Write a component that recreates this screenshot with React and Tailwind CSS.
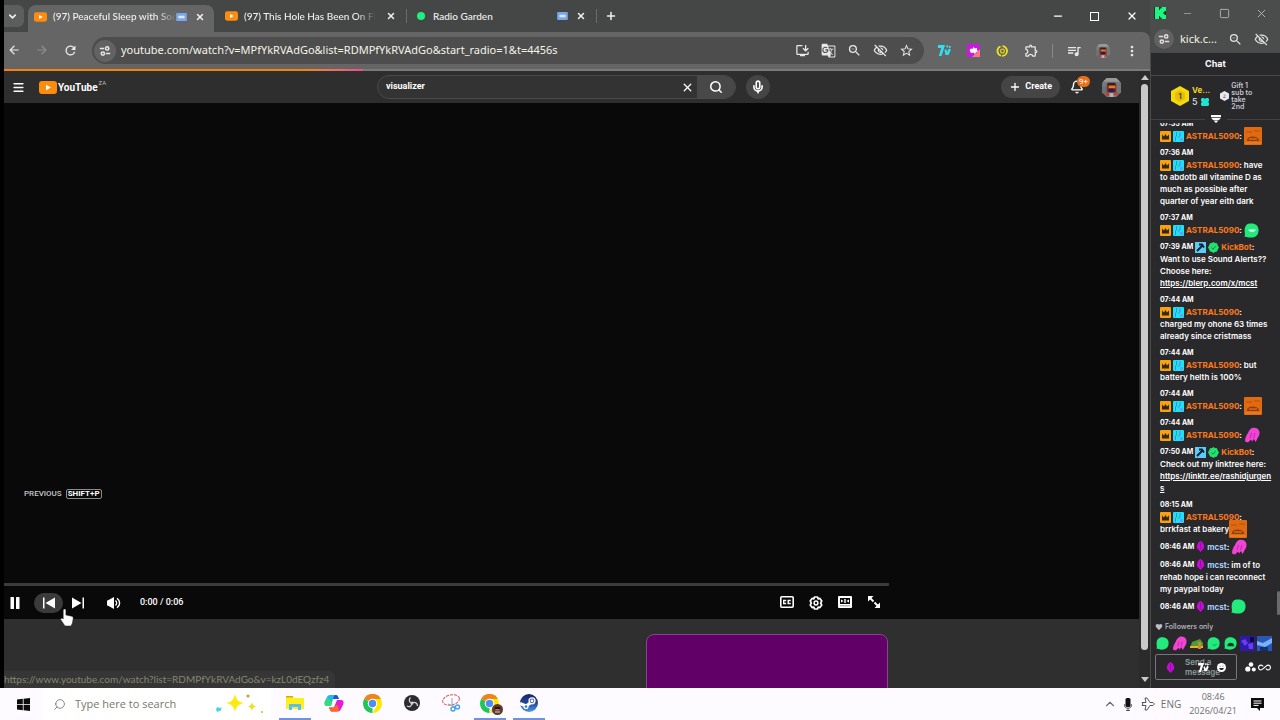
import { useState } from "react";
import {
  MdArrowBack,
  MdArrowForward,
  MdRefresh,
  MdOutlineInstallDesktop,
  MdGTranslate,
  MdZoomOut,
  MdOutlineVisibilityOff,
  MdStarBorder,
  MdOutlineExtension,
  MdQueueMusic,
  MdMoreVert,
  MdFavorite,
  MdAllInclusive,
} from "react-icons/md";
import {
  ChevronDown,
  ChevronUp,
  X,
  Plus,
  Menu,
  Search,
  Mic,
  Bell,
  Minus,
  Square,
} from "lucide-react";

/* ---------- small shared icons ---------- */

function PlayBadge({ className }) {
  return (
    <svg viewBox="0 0 18 13" className={className}>
      <rect width="18" height="13" rx="3" fill="#fb8c0e" />
      <path d="M7 3.7 12 6.5 7 9.3Z" fill="#fff" />
    </svg>
  );
}

function CastBadge() {
  return (
    <svg viewBox="0 0 12 9" className="h-2 w-[11px] shrink-0">
      <rect width="12" height="9" rx="1" fill="#7ba7ea" />
      <rect x="2.5" y="3" width="7" height="3" rx="1" fill="#dbe8ff" />
    </svg>
  );
}

function TuneIcon({ className }) {
  return (
    <svg
      viewBox="0 0 14 14"
      className={className}
      fill="none"
      stroke="currentColor"
      strokeWidth="1.8"
    >
      <path d="M1 4h5M8 10h5" />
      <circle cx="9.5" cy="4" r="1.9" />
      <circle cx="4.5" cy="10" r="1.9" />
    </svg>
  );
}

function Avatar({ className }) {
  return (
    <svg viewBox="0 0 20 20" className={className}>
      <path d="M5 0h10l5 5v10l-5 5H5l-5-5V5Z" fill="#77787c" />
      <path d="M5 0h10l4 4H1Z" fill="#98999d" />
      <path d="M0 9h5v7H0Z" fill="#64747f" />
      <path d="M5 6h10v9H5Z" fill="#7a2c1c" />
      <path d="M6 5h8v3H6Z" fill="#38201f" />
      <path d="M7 8h7v3H7Z" fill="#ee7a26" />
      <path d="M7 11h6v4H7Z" fill="#33194c" />
      <path d="M3 15h5l-1 4H4ZM12 15h4l1 3h-5Z" fill="#b0453a" />
      <path d="M8 16h4v4H8Z" fill="#b4b5b8" />
    </svg>
  );
}

/* ---------- chat badges and emotes ---------- */

function CrownBadge() {
  return (
    <svg viewBox="0 0 11 11" className="size-[11px] shrink-0">
      <rect width="11" height="11" rx="1" fill="#f5a312" />
      <path d="M2 3.5 4 5.5 5.5 3 7 5.5 9 3.5V8.5H2Z" fill="#3b2503" />
    </svg>
  );
}

function CyanBadge() {
  return (
    <svg viewBox="0 0 11 11" className="size-[11px] shrink-0">
      <rect width="11" height="11" rx="1" fill="#1fe0f5" />
      <path d="M3.500 1v4l-1 1v4M7 1v4l-2 1.500" stroke="#3f8fd0" fill="none" />
      <path d="M7 7h3v3H7Z" fill="#6d9df0" />
    </svg>
  );
}

function BotBadge() {
  return (
    <svg viewBox="0 0 11 11" className="size-[11px] shrink-0">
      <rect width="11" height="11" fill="#5ccbf5" />
      <path
        d="M2 9 7 4M4 2.500h3l2 3"
        stroke="#0d2033"
        strokeWidth="1.8"
        fill="none"
      />
    </svg>
  );
}

function VerifiedBadge() {
  return (
    <svg viewBox="0 0 11 11" className="size-[11px] shrink-0">
      <path
        d="M5.500 0 7 1l2 .2.600 1.800L11 5.500 9.800 7.500 9 9.500 7 10 5.500 11 4 10 2 9.500 1.200 7.500 0 5.500 1.200 3.200 2 1.200 4 1Z"
        fill="#1fe070"
      />
      <path d="m3.500 5.600 1.500 1.500 2.800-3" stroke="#12813f" fill="none" />
    </svg>
  );
}

function MicBadge({ className }) {
  return (
    <svg viewBox="0 0 10 12" className={className}>
      <path
        d="M5 0C7 1 8.500 2.500 9 5.500 9.500 8 8 9 7 10L5 12 3 10C2 9 .5 8 1 5.500 1.500 2.500 3 1 5 0Z"
        fill="#c50bd6"
      />
      <path d="M5 2v7" stroke="#8a0798" />
    </svg>
  );
}

function OrangeEmote() {
  return (
    <svg viewBox="0 0 18 18" className="-my-1 inline-block size-[18px]">
      <rect width="18" height="18" rx="1" fill="#e06a10" />
      <path d="M2 5h6M10 4h6" stroke="#b9500a" />
      <path d="M3 12.500c1-4 10-4 12 0v1.500H3Z" fill="#8f3d05" />
      <path d="M5 12h8M1 16h16" stroke="#f08a2c" />
    </svg>
  );
}

function GreenEmote({ mouth, className }) {
  return (
    <svg viewBox="0 0 14 14" className={className}>
      <path
        d="M4 .8C8-.4 13 1 13.500 5.500S12 13 8 13.500C4.500 14 2.500 12.800 .3 12.500 1.500 11 .5 9.500 .6 6.500 .7 3.500 2 1.500 4 .8Z"
        fill="#22ea7c"
      />
      {mouth === "smile" && <path d="M4 6h7c0 3-7 3-7 0Z" fill="#d8ffe9" />}
      {mouth === "open" && (
        <path d="M3.500 10c0-5 7.500-5 7.500 0Z" fill="#0c3b22" />
      )}
      {mouth === "line" && (
        <path d="M6 8.500c2 .8 3 .3 4.500-.8" stroke="#119950" fill="none" />
      )}
    </svg>
  );
}

function PinkEmote({ className }) {
  return (
    <svg viewBox="0 0 16 16" className={className}>
      <path
        d="M8 1c3-1 7 0 7.500 4 .3 4-1.500 5-2.500 7.500l-1.500 2.500-1.500-3-2 2.500-1-2-3 3-3-1C1 11 2 9 4 6 5 3.500 6 2 8 1Z"
        fill="#f044d2"
      />
      <path d="M7.500 6 6 11M11 6l-1.500 5" stroke="#c426ac" fill="none" />
    </svg>
  );
}

const emotes = {
  orange: <OrangeEmote />,
  pink: <PinkEmote className="-my-1 inline-block size-4" />,
  greenSmile: (
    <GreenEmote mouth="smile" className="-my-1 inline-block size-[15px]" />
  ),
  green: <GreenEmote className="-my-1 inline-block size-[15px]" />,
};

/* ---------- data ---------- */

const messages = [
  { time: "07:35 AM", user: "astral", emote: "orange" },
  {
    time: "07:36 AM",
    user: "astral",
    first: "have",
    lines: [
      "to abdotb all vitamine D as",
      "much as possible after",
      "quarter of year eith dark",
    ],
  },
  { time: "07:37 AM", user: "astral", emote: "greenSmile" },
  {
    time: "07:39 AM",
    user: "bot",
    lines: ["Want to use Sound Alerts??", "Choose here:"],
    link: ["https://blerp.com/x/mcst"],
  },
  {
    time: "07:44 AM",
    user: "astral",
    lines: ["charged my ohone 63 times", "already since cristmass"],
  },
  {
    time: "07:44 AM",
    user: "astral",
    first: "but",
    lines: ["battery helth is 100%"],
  },
  { time: "07:44 AM", user: "astral", emote: "orange" },
  { time: "07:44 AM", user: "astral", emote: "pink" },
  {
    time: "07:50 AM",
    user: "bot",
    lines: ["Check out my linktree here:"],
    link: ["https://linktr.ee/rashidjurgen", "s"],
  },
  {
    time: "08:15 AM",
    user: "astral",
    lines: ["brrkfast at bakery"],
    tailEmote: "orange",
  },
  { time: "08:46 AM", user: "mcst", emote: "pink" },
  {
    time: "08:46 AM",
    user: "mcst",
    first: "im of to",
    lines: ["rehab hope i can reconnect", "my paypal today"],
  },
  { time: "08:46 AM", user: "mcst", emote: "green" },
];

function Message({ msg }) {
  const time = <span className="text-[7px] font-bold">{msg.time}</span>;
  return (
    <li className="text-[8px] leading-3 font-semibold whitespace-nowrap text-white">
      {msg.user === "astral" && (
        <>
          <div className="flex h-3 items-center">{time}</div>
          <div className="flex h-3 items-center gap-0.5">
            <CrownBadge />
            <CyanBadge />
            <span>
              <span className="font-bold text-[#ff7a1a]">ASTRAL5090</span>:
            </span>
            {msg.first}
            {msg.emote && emotes[msg.emote]}
          </div>
        </>
      )}
      {msg.user === "bot" && (
        <div className="flex h-3 items-center gap-0.5">
          {time}
          <BotBadge />
          <VerifiedBadge />
          <span>
            <span className="font-bold text-[#ff7a1a]">KickBot</span>:
          </span>
        </div>
      )}
      {msg.user === "mcst" && (
        <div className="flex h-[13px] items-center gap-0.5">
          {time}
          <MicBadge className="h-[11px] w-[9px]" />
          <span>
            <span className="font-bold text-[#a9d0ff]">mcst</span>:
          </span>
          {msg.first}
          {msg.emote && emotes[msg.emote]}
        </div>
      )}
      {msg.lines?.map((line, i) => (
        <div key={line} className="flex h-3 items-center">
          {line}
          {i === msg.lines.length - 1 && msg.tailEmote && emotes[msg.tailEmote]}
        </div>
      ))}
      {msg.link && (
        <a href="#link" className="underline">
          {msg.link.map((part) => (
            <span key={part} className="block">
              {part}
            </span>
          ))}
        </a>
      )}
    </li>
  );
}

/* ---------- browser chrome ---------- */

function TabStrip() {
  return (
    <div className="flex h-8 items-center bg-[#454746] font-[Lato,sans-serif] text-[10px] font-medium text-[#f0f0f0]">
      <button
        aria-label="Search tabs"
        className="flex h-[22px] w-5 items-center justify-center rounded-r-md bg-[#5c5d5d] pr-1"
      >
        <ChevronDown size={11} strokeWidth={3.5} />
      </button>

      <div className="ml-1 flex h-full items-end">
        <div className="flex h-[27px] w-[186px] items-center rounded-t-lg bg-[#656565] pb-1 pl-1.5">
          <PlayBadge className="h-2.5 w-[13px] shrink-0" />
          <span className="ml-1.5 w-[123px] mask-r-from-85% whitespace-nowrap">
            (97) Peaceful Sleep with Soc
          </span>
          <CastBadge />
          <button aria-label="Close tab" className="ml-2">
            <X size={10} strokeWidth={3.5} />
          </button>
        </div>
      </div>

      <div className="ml-[11px] flex items-center">
        <PlayBadge className="h-2.5 w-[13px] shrink-0" />
        <span className="ml-1.5 w-[132px] mask-r-from-85% whitespace-nowrap">
          (97) This Hole Has Been On Fire
        </span>
        <button aria-label="Close tab" className="ml-2.5">
          <X size={10} strokeWidth={3.5} />
        </button>
        <span className="ml-2.5 h-3.5 w-px bg-[#6b6b6b]" />
      </div>

      <div className="ml-2.5 flex items-center">
        <span className="size-2 rounded-full bg-[#1fee83]" />
        <span className="ml-2 w-[124px] whitespace-nowrap">Radio Garden</span>
        <CastBadge />
        <button aria-label="Close tab" className="ml-2">
          <X size={10} strokeWidth={3.5} />
        </button>
        <span className="ml-2.5 h-3.5 w-px bg-[#6b6b6b]" />
        <button aria-label="New tab" className="ml-2">
          <Plus size={12} strokeWidth={3} />
        </button>
      </div>

      <div className="ml-auto flex items-center text-white">
        <button aria-label="Minimize" className="flex w-[37px] justify-center">
          <Minus size={12} strokeWidth={2.5} />
        </button>
        <button aria-label="Maximize" className="flex w-[37px] justify-center">
          <span className="size-[9px] border border-white" />
        </button>
        <button aria-label="Close" className="flex w-[37px] justify-center">
          <X size={12} strokeWidth={2.5} />
        </button>
      </div>
    </div>
  );
}

function Toolbar() {
  const omniIcons = [
    ["Install", MdOutlineInstallDesktop],
    ["Translate", MdGTranslate],
    ["Zoom", MdZoomOut],
    ["Tracking", MdOutlineVisibilityOff],
    ["Bookmark", MdStarBorder],
  ];
  return (
    <div className="bg-[#454746]">
      <div className="flex h-[37px] items-center rounded-tr-lg bg-[#656565] pr-2 text-[#e8e8e8]">
        <div className="flex gap-2">
          <button aria-label="Back" className="flex w-5 justify-center">
            <MdArrowBack size={14} />
          </button>
          <button
            aria-label="Forward"
            className="flex w-5 justify-center text-[#8e8e8e]"
          >
            <MdArrowForward size={14} />
          </button>
          <button aria-label="Reload" className="flex w-5 justify-center">
            <MdRefresh size={15} />
          </button>
        </div>

        <div className="ml-3 flex h-[27px] flex-1 items-center rounded-full bg-[#4d4d4d] pr-1.5 pl-0.5">
          <button
            aria-label="Site information"
            className="flex size-[22px] shrink-0 items-center justify-center rounded-full bg-[#626262]"
          >
            <TuneIcon className="size-3" />
          </button>
          <input
            aria-label="Address"
            defaultValue="youtube.com/watch?v=MPfYkRVAdGo&list=RDMPfYkRVAdGo&start_radio=1&t=4456s"
            className="ml-[5px] min-w-0 flex-1 bg-transparent font-['Noto_Sans',sans-serif] text-[11px] text-[#f4f4e8] outline-none"
          />
          <div className="flex gap-0.5">
            {omniIcons.map(([label, Icon]) => (
              <button
                key={label}
                aria-label={label}
                className="flex w-6 justify-center"
              >
                <Icon size={15} />
              </button>
            ))}
          </div>
        </div>

        <div className="ml-2.5 flex items-center gap-[9px]">
          <button aria-label="7TV" className="flex w-5 justify-center">
            <svg viewBox="0 0 13 11" className="h-[11px] w-[13px]" fill="#35dcf0">
              <path d="M0 0h7L6 3.500 3.500 11H.8L3.200 3H0Z" />
              <path d="M6.500 5 8.200 4l1 3 1.600-3.500L13 4.500 10.500 10H7.500ZM8 1l2-1 .5 2-1.500.8ZM11 1l2 .3-.8 1.700H11Z" />
            </svg>
          </button>
          <button
            aria-label="Sound extension"
            className="flex w-5 justify-center"
          >
            <svg viewBox="0 0 13 13" className="size-[13px]">
              <rect width="13" height="13" fill="#c819dc" />
              <path d="M13 5v8H5Z" fill="#f7768c" />
              <path
                d="M2.500 6 4 4.500 5.500 5 6.500 3 8 4.500l2-.5V6l1 1.500-2 .5-1 2-1.500-1.500L4 9Z"
                fill="#fff"
              />
            </svg>
          </button>
          <button
            aria-label="Coin extension"
            className="flex w-5 justify-center"
          >
            <svg viewBox="0 0 12 12" className="size-3" fill="none">
              <path
                d="M6.500 1.200A4.800 4.800 0 0 1 6 10.800M4.500 1.500A4.800 4.800 0 0 0 5 10.600"
                stroke="#f0e11c"
                strokeWidth="1.800"
              />
              <circle cx="6.500" cy="6" r="1.900" stroke="#d8c911" strokeWidth="1.300" />
            </svg>
          </button>
          <button aria-label="Extensions" className="flex w-5 justify-center">
            <MdOutlineExtension size={15} />
          </button>
          <span className="mx-0.5 h-3.5 w-px bg-[#8a8a8a]" />
          <button aria-label="Media" className="flex w-5 justify-center">
            <MdQueueMusic size={16} />
          </button>
          <button aria-label="Profile" className="flex w-5 justify-center">
            <Avatar className="size-3.5" />
          </button>
          <button aria-label="More" className="flex w-5 justify-center">
            <MdMoreVert size={16} />
          </button>
        </div>
      </div>
      {/* page load bar */}
      <div className="h-0.5 bg-[#7a7a7a]">
        <div className="h-full w-[359px] bg-linear-to-r from-[#f5820f] from-85% to-[#e8508c]" />
      </div>
    </div>
  );
}

/* ---------- YouTube page ---------- */

function Masthead() {
  const [query, setQuery] = useState("visualizer");
  return (
    <header className="flex h-8 items-center bg-[#2e2e2e] pr-1 pl-2 font-[Roboto,sans-serif] text-white">
      <div className="flex flex-1 items-center">
        <button aria-label="Guide">
          <Menu size={13} strokeWidth={3} />
        </button>
        <a href="#home" className="ml-3.5 flex items-center">
          <PlayBadge className="h-[13px] w-[18px]" />
          <span className="ml-px text-[10px] font-bold">YouTube</span>
          <span className="ml-px self-start text-[6px] leading-none text-[#bbb]">
            ZA
          </span>
        </a>
      </div>

      <div className="flex w-[393px] items-center">
        <div className="flex h-6 flex-1 items-center overflow-hidden rounded-full border border-[#4a4a4a] bg-[#333]">
          <input
            aria-label="Search"
            value={query}
            onChange={(e) => setQuery(e.target.value)}
            className="ml-2 min-w-0 flex-1 bg-transparent text-[9px] font-bold outline-none"
          />
          <button aria-label="Clear" onClick={() => setQuery("")}>
            <X size={13} strokeWidth={2.4} />
          </button>
          <button
            aria-label="Search"
            className="ml-[3px] flex h-full w-[38px] items-center justify-center bg-[#484848]"
          >
            <Search size={14} strokeWidth={2.6} />
          </button>
        </div>
        <button
          aria-label="Search with your voice"
          className="ml-2.5 flex size-6 items-center justify-center rounded-full bg-[#454545]"
        >
          <Mic size={14} strokeWidth={2.8} />
        </button>
      </div>

      <div className="flex flex-1 items-center justify-end">
        <button className="flex h-[22px] items-center gap-1 rounded-full bg-[#454545] px-2 text-[9px] font-bold">
          <Plus size={12} strokeWidth={2.6} />
          Create
        </button>
        <button aria-label="Notifications" className="relative ml-2.5">
          <Bell size={14} strokeWidth={2.4} />
          <span className="absolute -top-1 left-[7px] rounded-full bg-[#e8701c] px-0.5 text-[8px] leading-[11px]">
            9+
          </span>
        </button>
        <button aria-label="Account" className="mr-3.5 ml-4.5">
          <Avatar className="size-[19px]" />
        </button>
      </div>
    </header>
  );
}

function Player() {
  return (
    <div className="flex flex-1 flex-col justify-end bg-[#090909] font-[Roboto,sans-serif] text-white">
      <div className="flex w-[78%] flex-col">
        <div className="mb-[83px] ml-5 flex items-center gap-1 text-[8px] font-medium text-[#c8c8c8]">
          PREVIOUS
          <kbd className="rounded-xs border border-[#8a8a8a] px-px font-[Roboto,sans-serif] text-[8px] leading-2 font-bold text-white">
            SHIFT+P
          </kbd>
        </div>
        <div className="h-[3px] bg-[#3c3c3c]" />
        <div className="flex h-[33px] items-center pr-px">
          <button aria-label="Pause" className="flex w-[22px] justify-center">
            <svg viewBox="0 0 10 12" className="h-3 w-2.5" fill="#fff">
              <rect x="0.500" width="3.500" height="12" rx="0.500" />
              <rect x="6" width="3.500" height="12" rx="0.500" />
            </svg>
          </button>
          <button
            aria-label="Previous"
            className="ml-2 flex h-5 w-[29px] items-center justify-center rounded-full bg-[#3b3b3b]"
          >
            <svg viewBox="0 0 12 12" className="size-3" fill="#fff">
              <path d="M0 .5h1.500v11H0ZM12 .5v11L2.500 6Z" />
            </svg>
          </button>
          <button aria-label="Next" className="flex w-[29px] justify-center">
            <svg viewBox="0 0 12 12" className="size-3" fill="#fff">
              <path d="M10.500 .5H12v11h-1.500ZM0 .5 9.500 6 0 11.500Z" />
            </svg>
          </button>
          <button
            aria-label="Mute"
            className="ml-[7px] flex w-[29px] justify-center"
          >
            <svg viewBox="0 0 14 12" className="h-3 w-3.5">
              <path
                d="M0 4.500C0 3.500 1 3 2.500 2.500L7 0v12L2.500 9.500C1 9 0 8.500 0 7.500Z"
                fill="#fff"
              />
              <path
                d="M8.500 3.500c1.500 1.500 1.500 3.500 0 5M10 1.200c3.500 2.500 3.500 7.100 0 9.600"
                stroke="#fff"
                strokeWidth="1.400"
                fill="none"
              />
            </svg>
          </button>
          <span className="ml-3 text-[9px] font-medium">0:00 / 0:06</span>

          <div className="ml-auto flex">
            <button
              aria-label="Subtitles"
              className="flex w-[29px] justify-center"
            >
              <svg
                viewBox="0 0 14 12"
                className="h-3 w-3.5"
                fill="none"
                stroke="#fff"
              >
                <rect
                  x="0.800"
                  y="0.800"
                  width="12.400"
                  height="10.400"
                  rx="1"
                  strokeWidth="1.600"
                />
                <path
                  d="M6.200 4.500H3.700v3h2.500M10.700 4.500H8.200v3h2.500"
                  strokeWidth="1.400"
                />
              </svg>
            </button>
            <button
              aria-label="Settings"
              className="flex w-[29px] justify-center"
            >
              <svg
                viewBox="0 0 14 14"
                className="size-3.5"
                fill="none"
                stroke="#fff"
              >
                <path
                  d="M5.500 1h3l.6 1.800 1.800-.4 1.900 2.500L11.700 7l1.100 2.100-1.900 2.500-1.800-.4L8.500 13h-3l-.6-1.800-1.800.4-1.900-2.500L2.300 7 1.200 4.900l1.900-2.500 1.800.4Z"
                  strokeWidth="1.700"
                  strokeLinejoin="round"
                />
                <circle cx="7" cy="7" r="1.900" strokeWidth="1.500" />
              </svg>
            </button>
            <button
              aria-label="Default view"
              className="flex w-[29px] justify-center"
            >
              <svg viewBox="0 0 14 12" className="h-3 w-3.5">
                <rect width="14" height="12" rx="1" fill="#fff" />
                <path d="M2 2h10v6H2Z" fill="#090909" />
                <path
                  d="M3 3.500 5.500 5 3 6.500ZM11 3.500 8.500 5 11 6.500ZM6.300 3h1.400v4H6.300Z"
                  fill="#fff"
                />
                <path d="M2 9.800h10" stroke="#777" strokeWidth="0.800" />
              </svg>
            </button>
            <button
              aria-label="Full screen"
              className="flex w-[29px] justify-center"
            >
              <svg viewBox="0 0 12 12" className="size-3">
                <path d="M0 0h5.500L0 5.500ZM12 12H6.500L12 6.500Z" fill="#fff" />
                <path
                  d="m2 2 3.500 3.500M10 10 6.500 6.500"
                  stroke="#fff"
                  strokeWidth="1.800"
                />
              </svg>
            </button>
          </div>
        </div>
      </div>
    </div>
  );
}

function HandCursor() {
  return (
    <svg
      viewBox="0 0 14 19"
      className="absolute bottom-[61px] left-14 h-[19px] w-3.5"
    >
      <path
        d="M4 1.200c.9-.4 1.900.1 1.900 1.200V7l5.600 1.200c1.300.3 1.900 1 1.700 2.300l-.8 4.500-1.400 3H5L.8 11.800c-.5-1 .3-1.900 1.300-1.600L3.200 11V2.200C3.200 1.700 3.500 1.400 4 1.200Z"
        fill="#fff"
        stroke="#222"
        strokeWidth="0.500"
      />
    </svg>
  );
}

function YouTubePage() {
  return (
    <div className="flex min-h-0 flex-1">
      <div className="relative flex min-w-0 flex-1 flex-col bg-[#2f2f2f]">
        <Masthead />
        <Player />
        <div className="flex h-[69px] w-[78%] justify-end overflow-hidden pt-[15px] pr-px">
          <div className="h-20 w-[242px] rounded-lg border border-[#88458f] bg-[#610067]" />
        </div>
        <div className="absolute bottom-0 left-0 rounded-tr-md bg-[#363636] pr-1.5 font-[Lato,sans-serif] text-[10px] leading-[17px] text-[#85866f]">
          https://www.youtube.com/watch?list=RDMPfYkRVAdGo&v=kzL0dEQzfz4
        </div>
        <HandCursor />
      </div>
      {/* page scrollbar */}
      <div className="flex w-[11px] flex-col items-center bg-[#2b2b2b] py-1">
        <svg viewBox="0 0 8 5" className="mb-1 h-[5px] w-2" fill="#c9c9c9">
          <path d="M4 0 8 5H0Z" />
        </svg>
        <div className="w-[7px] flex-1 rounded-full bg-[#c9c9c9]" />
        <svg
          viewBox="0 0 8 5"
          className="mt-[27px] mb-0.5 h-[5px] w-2"
          fill="#c9c9c9"
        >
          <path d="M4 5 8 0H0Z" />
        </svg>
      </div>
    </div>
  );
}

/* ---------- Kick chat popout ---------- */

function KickWindow() {
  return (
    <aside className="flex w-[130px] shrink-0 flex-col border-l border-[#4a4a4a] bg-[#29292c] font-[Inter,sans-serif] text-white">
      <div className="flex h-[26px] items-center bg-[#4b4d4c] text-[#b4b4b4]">
        <svg viewBox="0 0 12 12" className="ml-[3px] size-3">
          <rect width="12" height="12" fill="#083c1c" />
          <path
            d="M1 0h4v3h1V1.500h1.500V0H12v4h-1.500v1H9.500v2h1v1H12v4H7.500v-1.500H6V9H5v3H1Z"
            fill="#1ff583"
          />
        </svg>
        <div className="ml-auto flex items-center">
          <button aria-label="Minimize" className="flex w-[37px] justify-center">
            <Minus size={11} strokeWidth={1.5} />
          </button>
          <button aria-label="Maximize" className="flex w-[37px] justify-center">
            <Square size={11} strokeWidth={2} />
          </button>
          <button aria-label="Close" className="flex w-[37px] justify-center">
            <X size={13} strokeWidth={1.8} />
          </button>
        </div>
      </div>
      <div className="flex h-[26px] items-center bg-[#4b4d4c] pl-[3px] font-['Noto_Sans',sans-serif] text-[#e0e0e0]">
        <button
          aria-label="Site information"
          className="flex size-5 items-center justify-center rounded-full bg-[#626262]"
        >
          <TuneIcon className="size-3" />
        </button>
        <span className="ml-1.5 flex-1 text-[11px] text-[#f5f5e8]">
          kick.c...
        </span>
        <button aria-label="Zoom" className="flex w-[26px] justify-center">
          <MdZoomOut size={15} />
        </button>
        <button aria-label="Tracking" className="flex w-[26px] justify-center">
          <MdOutlineVisibilityOff size={15} />
        </button>
        <span className="w-1.5" />
      </div>

      <h2 className="border-y border-[#4a4a4d] text-center text-[9px] leading-[22px] font-bold">
        Chat
      </h2>

      <div className="flex h-[39px] items-center pl-5">
        <svg viewBox="0 0 18 20" className="h-5 w-[18px]">
          <path d="M9 0 18 5v10l-9 5-9-5V5Z" fill="#f5d90c" />
          <path d="M9 4 14 7v6l-5 3-5-3V7Z" fill="#e3bf05" />
          <text
            x="9"
            y="13"
            textAnchor="middle"
            fontSize="8"
            fontWeight="700"
            fill="#5a4700"
          >
            1
          </text>
        </svg>
        <div className="ml-[3px] text-[8px] leading-3 font-bold">
          <div className="text-[#f7d914]">Ve...</div>
          <div className="flex items-center gap-[3px] text-[9px] font-medium text-[#ddd]">
            5
            <svg viewBox="0 0 8 8" className="size-2" fill="#20e3d0">
              <path d="M1 0h2l1 1 1-1h2l1 1v2L7 4l1 1v2L7 8H1L0 7V5l1-1-1-1V1Z" />
            </svg>
          </div>
        </div>
        <svg viewBox="0 0 9 10" className="ml-2.5 h-2.5 w-[9px]">
          <path d="M4.500 0 9 2.500v5L4.500 10 0 7.500v-5Z" fill="#e8e8ec" />
          <path
            d="M3.500 6.500h2L3.500 6.500 5.300 4.200 3.700 3.800"
            stroke="#77777c"
            strokeWidth="0.700"
            fill="none"
          />
        </svg>
        <p className="ml-0.5 text-[7px] leading-[7px] font-semibold text-[#c2c5d2]">
          Gift 1
          <br />
          sub to
          <br />
          take
          <br />
          2nd
        </p>
      </div>
      <div className="flex items-center gap-1.5">
        <span className="h-px flex-1 bg-[#434346]" />
        <svg viewBox="0 0 10 8" className="h-2 w-2.5" fill="#fff">
          <path d="M0 0h10v2H0ZM0 2.800h10L8 5H2ZM2.500 5.500h5L5 8Z" />
        </svg>
        <span className="h-px flex-1 bg-[#434346]" />
      </div>

      <div className="flex min-h-0 flex-1 items-end">
        <ul className="flex h-full flex-1 flex-col justify-end gap-[5px] overflow-hidden pb-1.5 pl-[9px]">
          {messages.map((msg, i) => (
            <Message key={i} msg={msg} />
          ))}
        </ul>
        <span className="mb-1 h-6 w-[3px] shrink-0 rounded-full bg-[#6b6b6e]" />
      </div>

      <div className="px-1">
        <p className="flex items-center gap-0.5 text-[7px] leading-4 font-medium text-[#bdbdc2]">
          <MdFavorite size={8} />
          Followers only
        </p>
        <div className="flex h-4 items-center gap-0.5">
          <GreenEmote className="size-[15px] p-px" />
          <PinkEmote className="size-[15px]" />
          <svg viewBox="0 0 15 15" className="size-[15px]">
            <path d="M1 12 3 6l8-3 3 4v5Z" fill="#4f9b36" />
            <path d="M1 10h13v2H1Z" fill="#e6b62a" />
            <path d="M9 6h3v7H9Z" fill="#d18a2a" />
          </svg>
          <GreenEmote mouth="line" className="size-[15px] p-px" />
          <GreenEmote mouth="open" className="size-[15px] p-px" />
          <svg viewBox="0 0 15 15" className="size-[15px]">
            <rect width="15" height="15" fill="#2d1aa8" />
            <path d="M1 5 5 3l3 4-3 3ZM8 8l5-1v6H9Z" fill="#6a3df0" />
            <path d="M10 1h4v5h-4Z" fill="#11083f" />
          </svg>
          <svg viewBox="0 0 15 15" className="size-[15px]">
            <rect width="15" height="15" fill="#2857b8" />
            <path d="M0 5 6 7l9-5v5L8 11 0 9Z" fill="#7ab2f5" />
            <path d="M3 11h8v4H3Z" fill="#16306f" />
          </svg>
        </div>
        <div className="mt-[3px] mb-2 flex items-center">
          <div className="relative flex h-[26px] w-[82px] items-center rounded-xs border border-[#77777b]">
            <MicBadge className="ml-2.5 h-[13px] w-[9px]" />
            <textarea
              aria-label="Send a message"
              placeholder="Send a message"
              rows={2}
              className="ml-2.5 w-11 resize-none overflow-hidden bg-transparent text-[8px] leading-[10px] font-semibold outline-none placeholder:text-[#8f9f9c]"
            />
            <svg
              viewBox="0 0 13 11"
              className="absolute top-2 left-[42px] h-[9px] w-[11px]"
              fill="#fff"
            >
              <path d="M0 0h7L6 3.500 3.500 11H.8L3.200 3H0Z" />
              <path d="M6.500 5 8.200 4l1 3 1.600-3.500L13 4.500 10.500 10H7.500ZM8 1l2-1 .5 2-1.500.8ZM11 1l2 .3-.8 1.700H11Z" />
            </svg>
            <svg
              viewBox="0 0 10 10"
              className="absolute top-2 right-2.5 size-[9px]"
            >
              <circle cx="5" cy="5" r="5" fill="#fff" />
              <path
                d="M2.500 5.500h5c0 3-5 3-5 0ZM3 3h1v1H3ZM6 3h1v1H6Z"
                fill="#29292c"
              />
            </svg>
          </div>
          <svg viewBox="0 0 11 10" className="ml-2 h-2.5 w-[11px]" fill="#fff">
            <circle cx="6" cy="2.500" r="2.300" />
            <circle cx="2.800" cy="7" r="2.600" />
            <circle cx="8.800" cy="7.500" r="2" />
          </svg>
          <MdAllInclusive size={13} className="ml-0.5" />
        </div>
      </div>
    </aside>
  );
}

/* ---------- Windows taskbar ---------- */

function ChromeLogo({ className }) {
  return (
    <svg viewBox="0 0 20 20" className={className}>
      <path d="M10 10 1.340 5A10 10 0 0 1 18.660 5Z" fill="#f08419" />
      <path d="M10 10v10A10 10 0 0 1 1.340 5Z" fill="#22c55a" />
      <path d="M10 5h8.660A10 10 0 0 1 10 20l4.300-7.500Z" fill="#ffe800" />
      <path d="M1.340 5A10 10 0 0 1 18.660 5H10Z" fill="#f08419" />
      <circle cx="10" cy="10" r="5" fill="#fff" />
      <circle cx="10" cy="10" r="3.900" fill="#4f8df5" />
    </svg>
  );
}

function ObsLogo() {
  return (
    <svg viewBox="0 0 16 16" className="size-4">
      <circle cx="8" cy="8" r="8" fill="#2c2c30" />
      <g fill="none" stroke="#d4d4d8" strokeWidth="1.300">
        <path d="M8 8C5 7.500 4.500 4.500 6.500 2.500" />
        <path d="M8 8c3-1.500 5.500.2 5.500 3" />
        <path d="M8 8c0 3-2.500 4.500-5 3" />
      </g>
      <circle cx="8" cy="8" r="1.500" fill="#d4d4d8" />
    </svg>
  );
}

function SteamLogo() {
  return (
    <svg viewBox="0 0 18 18" className="size-[18px]">
      <defs>
        <linearGradient id="steamBlue" x1="0" y1="0" x2="0" y2="1">
          <stop offset="0" stopColor="#1a2360" />
          <stop offset="0.500" stopColor="#2347a0" />
          <stop offset="1" stopColor="#4c9be8" />
        </linearGradient>
      </defs>
      <circle cx="9" cy="9" r="9" fill="url(#steamBlue)" />
      <path d="M0 9.500 6 12l5-3.500" stroke="#fff" strokeWidth="3" fill="none" />
      <circle cx="6" cy="12.500" r="2.600" fill="#fff" />
      <circle cx="6" cy="12.500" r="1.300" fill="#3a77cc" />
      <circle cx="12" cy="6.800" r="3.600" fill="#fff" />
      <circle cx="12" cy="6.800" r="2.200" fill="#23408f" />
      <circle cx="12" cy="6.800" r="1.500" fill="#fff" />
    </svg>
  );
}

function Taskbar() {
  const apps = [
    {
      name: "File Explorer",
      open: true,
      icon: (
        <svg viewBox="0 0 18 16" className="h-4 w-[18px]">
          <path d="M0 1h7l1 2h10v11H0Z" fill="#fdf01a" />
          <path d="M0 1h7v1.500H0Z" fill="#d9a90e" />
          <path d="M3 15V9h12v6h-3v-3H6v3Z" fill="#5cbdf0" />
        </svg>
      ),
    },
    {
      name: "Copilot",
      icon: (
        <svg viewBox="0 0 20 18" className="h-[18px] w-5">
          <path
            d="M6 1h6c2 0 2 2 3 4H9L7 12H3C0 12 0 9 1 7l2-4C4 1.500 5 1 6 1Z"
            fill="#22b8f0"
          />
          <path d="M3 4 1 9c-.5 2 .5 3 2 3h4l1-4Z" fill="#35e06a" />
          <path d="M11 1c3 0 3 2 4 4H9l1-3Z" fill="#2750d8" />
          <path
            d="M13 6h4c3 0 3 3 2 5l-2 4c-1 2-2 2.500-4 2.500H8c-2 0-2-2-3-4h5Z"
            fill="#e51ccf"
          />
          <path
            d="M5 13.500h5l3-3 2 5c-1 1.500-1 2-3 2H8c-2 0-2-2-3-4Z"
            fill="#ff6b1c"
          />
        </svg>
      ),
    },
    { name: "Chrome", icon: <ChromeLogo className="size-[19px]" /> },
    { name: "OBS", icon: <ObsLogo /> },
    {
      name: "Snipping Tool",
      icon: (
        <svg viewBox="0 0 20 18" className="h-[18px] w-5" fill="none">
          <ellipse
            cx="10"
            cy="6"
            rx="8.500"
            ry="5"
            stroke="#e35252"
            strokeDasharray="3 1"
            transform="rotate(-12 10 6)"
          />
          <path d="M11 4v7M7 10l8 3" stroke="#9aa7b0" />
          <circle cx="12" cy="15" r="2" stroke="#3fa4e8" strokeWidth="1.400" />
          <circle cx="16.500" cy="13" r="2" stroke="#3fa4e8" strokeWidth="1.400" />
        </svg>
      ),
    },
    {
      name: "Chrome profile",
      open: true,
      icon: (
        <span className="relative">
          <ChromeLogo className="size-[19px]" />
          <svg
            viewBox="0 0 11 11"
            className="absolute -right-1 -bottom-0.5 size-[11px]"
          >
            <circle cx="5.500" cy="5.500" r="5.500" fill="#5a3a30" />
            <path d="M3 3h5v2H3Z" fill="#2a1515" />
            <path d="M3.500 5h4v1.500h-4Z" fill="#d86a4a" />
            <path d="M3 7h5v2H3Z" fill="#8f8a8a" />
          </svg>
        </span>
      ),
    },
    { name: "Steam", open: true, icon: <SteamLogo /> },
  ];
  return (
    <footer className="-ml-1 flex h-8 items-center bg-[#fdfbff] pl-[3px] font-['Open_Sans',sans-serif] text-[#6d6f6a]">
      <button aria-label="Start" className="flex w-10 justify-center">
        <svg viewBox="0 0 13 13" className="size-[13px]" fill="#0c0c0c">
          <path d="M0 1.600 5.800.8v5.400H0ZM6.600.7 13 0v6.200H6.600ZM0 6.900h5.800v5.400L0 11.500ZM6.600 6.900H13V13l-6.400-.8Z" />
        </svg>
      </button>
      <label className="flex h-full w-[228px] items-center bg-white pl-2.5">
        <Search size={13} strokeWidth={1.5} className="-scale-x-100" />
        <input
          aria-label="Type here to search"
          placeholder="Type here to search"
          className="ml-[9px] w-[130px] bg-transparent text-[11px] outline-none placeholder:text-[#77786a]"
        />
        <svg viewBox="0 0 48 22" className="ml-2.5 h-[22px] w-12">
          <path
            d="M20 1c1.500 6 3 8 9 9-6 1.500-7.500 3-9 9-1.500-6-3-7.500-9-9 6-1 7.500-3 9-9Z"
            fill="#fbea0c"
          />
          <path
            d="M37 9c.7 3 1.500 4 4.500 4.500-3 .7-3.800 1.500-4.500 4.500-.7-3-1.500-3.800-4.500-4.500 3-.5 3.800-1.500 4.500-4.500Z"
            fill="#f3dc18"
          />
          <path d="m2 14 3 1 1.500-1L6 17.500 2 19l-1-2.500Z" fill="#4fd3e0" />
          <circle cx="33" cy="3" r="1.500" fill="#c79a2c" />
          <circle cx="47" cy="19" r="1" fill="#d8b92c" />
        </svg>
      </label>
      <nav className="ml-1 flex h-full">
        {apps.map((app) => (
          <button
            key={app.name}
            aria-label={app.name}
            className="flex h-full w-[39px] flex-col items-center"
          >
            <span className="flex flex-1 items-center">{app.icon}</span>
            <span
              className={
                app.open ? "h-0.5 w-8 bg-[#6c93dd]" : "h-0.5 w-8 bg-transparent"
              }
            />
          </button>
        ))}
      </nav>

      <div className="ml-auto flex items-center pr-4">
        <ChevronUp size={14} strokeWidth={2} />
        <svg viewBox="0 0 8 13" className="ml-[7px] h-[13px] w-2">
          <rect x="1.500" width="5" height="9" rx="1.500" fill="#111" />
          <path
            d="M.7 6v2c0 3 6.600 3 6.600 0V6M4 10V13M2 12.500h4"
            stroke="#555"
            fill="none"
          />
        </svg>
        <svg
          viewBox="0 0 14 14"
          className="ml-[9px] size-3.5"
          fill="none"
          stroke="#555"
        >
          <path d="M1 5.500h4L4 1h2l3 4.500h3l1.500 1.500L12 8.500H9L6 13H4l1-4.500H1L2 7Z" />
        </svg>
        <span className="ml-1.5 text-[10px]">ENG</span>
        <div className="ml-2 text-center text-[9px] leading-[14px]">
          <div>08:46</div>
          <div>2026/04/21</div>
        </div>
        <svg viewBox="0 0 13 13" className="ml-3.5 size-[13px]">
          <path d="M0 0h13v10H9v3L6 10H0Z" fill="#0c0c0c" />
          <path d="M2.500 3h8M2.500 5.200h8M2.500 7.400h5" stroke="#fff" />
        </svg>
      </div>
    </footer>
  );
}

export default function App() {
  return (
    <div className="flex h-screen flex-col overflow-hidden bg-black pl-1">
      <div className="flex min-h-0 flex-1">
        <main className="flex min-w-0 flex-1 flex-col">
          <TabStrip />
          <Toolbar />
          <YouTubePage />
        </main>
        <KickWindow />
      </div>
      <Taskbar />
    </div>
  );
}
